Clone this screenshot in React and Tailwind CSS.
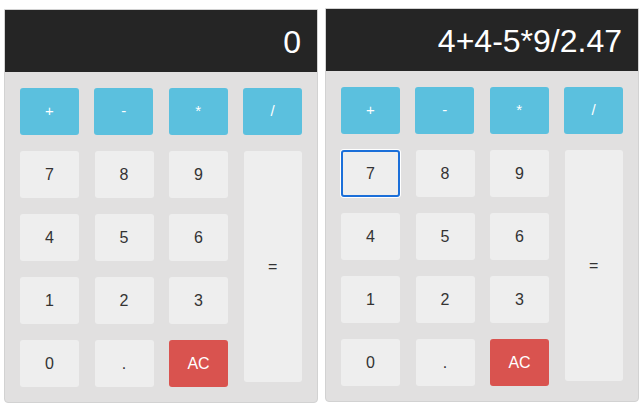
import { useState } from "react";

const OPS = ["+", "-", "*", "/"];
const ROWS = [
  ["7", "8", "9"],
  ["4", "5", "6"],
  ["1", "2", "3"],
];

function Key({ label, focused, onPress }) {
  return (
    <button
      onClick={() => onPress(label)}
      className={`w-[59px] h-[47px] rounded-[3px] bg-[#eeeeee] text-[16px] text-[#333] ${
        focused ? "border-2 border-[#1b6fd9] shadow-[0_0_0_1px_#ffffff]" : ""
      }`}
    >
      {label}
    </button>
  );
}

function Calculator({ initial, focusSeven }) {
  const [value, setValue] = useState(initial);

  const press = (k) => {
    if (k === "AC") return setValue("0");
    if (k === "=") {
      try {
        // eslint-disable-next-line no-new-func
        const r = Function(`return (${value})`)();
        setValue(String(Math.round(r * 1e8) / 1e8));
      } catch {
        setValue("Error");
      }
      return;
    }
    setValue((v) => (v === "0" || v === "Error" ? k : v + k));
  };

  return (
    <div className="w-[314px] h-[394px] border border-[#d2d2d2] rounded-b-[4px] bg-[#e1e0e0] flex flex-col">
      {/* display */}
      <div className="h-[62px] bg-[#252525] flex items-center justify-end pr-[16px] pt-[2px] text-white text-[32px] leading-none">
        {value}
      </div>

      <div className="px-[15px] pt-[16px]">
        {/* operators */}
        <div className="flex gap-[15.5px]">
          {OPS.map((op) => (
            <button key={op} onClick={() => press(op)} className="w-[59px] h-[47px] rounded-[3px] bg-[#5bc0de] text-white text-[15px]">
              {op}
            </button>
          ))}
        </div>

        <div className="flex gap-[15.5px] mt-[16px]">
          <div className="flex flex-col gap-[16px]">
            {ROWS.map((row) => (
              <div key={row[0]} className="flex gap-[15.5px]">
                {row.map((k) => (
                  <Key key={k} label={k} focused={focusSeven && k === "7"} onPress={press} />
                ))}
              </div>
            ))}
            <div className="flex gap-[15.5px]">
              <Key label="0" onPress={press} />
              <Key label="." onPress={press} />
              <button onClick={() => press("AC")} className="w-[59px] h-[47px] rounded-[3px] bg-[#d9534f] text-white text-[16px]">
                AC
              </button>
            </div>
          </div>

          <button onClick={() => press("=")} className="w-[59px] h-[231px] rounded-[3px] bg-[#eeeeee] text-[16px] text-[#333]">
            =
          </button>
        </div>
      </div>
    </div>
  );
}

export default function App() {
  return (
    <div className="w-[644px] h-[409px] bg-white flex gap-[7px] pl-[4px] pt-[9px] font-['Liberation_Sans',Arial,sans-serif]">
      <Calculator initial="0" />
      <div className="-mt-[1px]">
        <Calculator initial="4+4-5*9/2.47" focusSeven />
      </div>
    </div>
  );
}
